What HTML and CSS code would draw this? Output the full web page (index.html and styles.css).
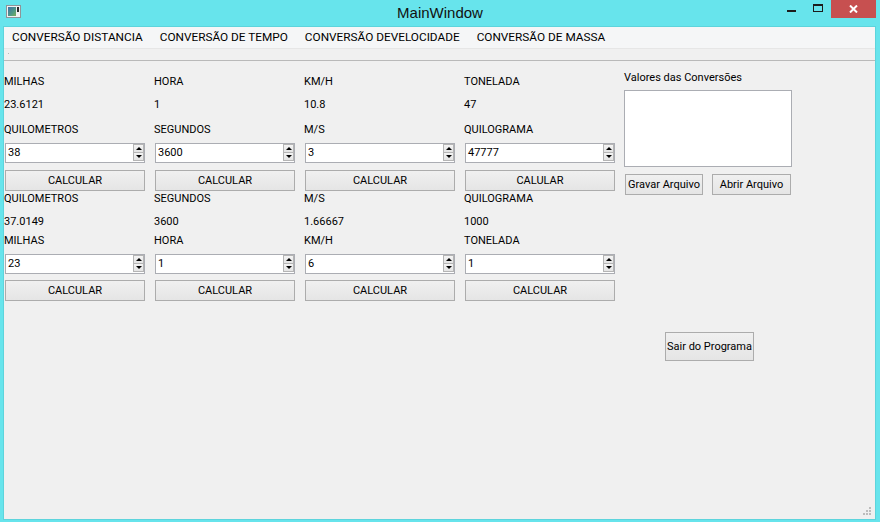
FILE: index.html
```html
<!DOCTYPE html>
<html>
<head>
<meta charset="utf-8">
<link rel="stylesheet" href="styles.css">
</head>
<body>
<div class="window">
  <div class="titlebar">
    <div class="tb-left">
      <svg class="app-icon" width="15" height="13" viewBox="0 0 15 13">
        <defs>
          <linearGradient id="pic" x1="0" y1="0" x2="1" y2="1">
            <stop offset="0" stop-color="#3f6fa8"/>
            <stop offset="0.6" stop-color="#4f9a86"/>
            <stop offset="1" stop-color="#7cae5a"/>
          </linearGradient>
        </defs>
        <rect x="0.5" y="0.5" width="14" height="12" fill="#f2f2f2" stroke="#8f9498"/>
        <rect x="2" y="2" width="8" height="9" fill="url(#pic)"/>
        <rect x="11" y="2" width="2" height="5" fill="#2a2a2a"/>
      </svg>
    </div>
    <div class="title">MainWindow</div>
    <div class="controls">
      <div class="ctl ctl-min"><span></span></div>
      <div class="ctl ctl-max"><span></span></div>
      <div class="ctl ctl-close">
        <svg width="9" height="8" viewBox="0 0 9 8"><path d="M1 0.5 L8 7.5 M8 0.5 L1 7.5" stroke="#fff" stroke-width="2"/></svg>
      </div>
    </div>
  </div>

  <div class="client">
    <div class="menubar">
      <span class="menu-item">CONVERSÃO DISTANCIA</span>
      <span class="menu-item">CONVERSÃO DE TEMPO</span>
      <span class="menu-item">CONVERSÃO DEVELOCIDADE</span>
      <span class="menu-item">CONVERSÃO DE MASSA</span>
    </div>
    <div class="toolbar"><span class="grip"></span></div>

    <div class="central">
      <div class="cols">
        <div class="col">
          <div class="txt r1">MILHAS</div>
          <div class="txt r2">23.6121</div>
          <div class="txt r3">QUILOMETROS</div>
          <div class="spin s1"><span class="spin-val">38</span><span class="spin-btns"><span class="sb"><i class="up"></i></span><span class="sb"><i class="down"></i></span></span></div>
          <div class="qbtn b1">CALCULAR</div>
          <div class="txt r4">QUILOMETROS</div>
          <div class="txt r5">37.0149</div>
          <div class="txt r6">MILHAS</div>
          <div class="spin s2"><span class="spin-val">23</span><span class="spin-btns"><span class="sb"><i class="up"></i></span><span class="sb"><i class="down"></i></span></span></div>
          <div class="qbtn b2">CALCULAR</div>
        </div>
        <div class="col">
          <div class="txt r1">HORA</div>
          <div class="txt r2">1</div>
          <div class="txt r3">SEGUNDOS</div>
          <div class="spin s1"><span class="spin-val">3600</span><span class="spin-btns"><span class="sb"><i class="up"></i></span><span class="sb"><i class="down"></i></span></span></div>
          <div class="qbtn b1">CALCULAR</div>
          <div class="txt r4">SEGUNDOS</div>
          <div class="txt r5">3600</div>
          <div class="txt r6">HORA</div>
          <div class="spin s2"><span class="spin-val">1</span><span class="spin-btns"><span class="sb"><i class="up"></i></span><span class="sb"><i class="down"></i></span></span></div>
          <div class="qbtn b2">CALCULAR</div>
        </div>
        <div class="col wide">
          <div class="txt r1">KM/H</div>
          <div class="txt r2">10.8</div>
          <div class="txt r3">M/S</div>
          <div class="spin s1"><span class="spin-val">3</span><span class="spin-btns"><span class="sb"><i class="up"></i></span><span class="sb"><i class="down"></i></span></span></div>
          <div class="qbtn b1">CALCULAR</div>
          <div class="txt r4">M/S</div>
          <div class="txt r5">1.66667</div>
          <div class="txt r6">KM/H</div>
          <div class="spin s2"><span class="spin-val">6</span><span class="spin-btns"><span class="sb"><i class="up"></i></span><span class="sb"><i class="down"></i></span></span></div>
          <div class="qbtn b2">CALCULAR</div>
        </div>
        <div class="col wide">
          <div class="txt r1">TONELADA</div>
          <div class="txt r2">47</div>
          <div class="txt r3">QUILOGRAMA</div>
          <div class="spin s1"><span class="spin-val">47777</span><span class="spin-btns"><span class="sb"><i class="up"></i></span><span class="sb"><i class="down"></i></span></span></div>
          <div class="qbtn b1">CALULAR</div>
          <div class="txt r4">QUILOGRAMA</div>
          <div class="txt r5">1000</div>
          <div class="txt r6">TONELADA</div>
          <div class="spin s2"><span class="spin-val">1</span><span class="spin-btns"><span class="sb"><i class="up"></i></span><span class="sb"><i class="down"></i></span></span></div>
          <div class="qbtn b2">CALCULAR</div>
        </div>
      </div>

      <div class="panel">
        <div class="panel-label">Valores das Conversões</div>
        <div class="textedit"></div>
        <div class="panel-btns">
          <div class="qbtn pbtn-save">Gravar Arquivo</div>
          <div class="qbtn pbtn-open">Abrir Arquivo</div>
        </div>
        <div class="qbtn exit">Sair do Programa</div>
      </div>
    </div>

    <svg class="sizegrip" width="10" height="10" viewBox="0 0 10 10">
      <rect x="7" y="0" width="2" height="2" fill="#bcbcbc"/>
      <rect x="4" y="3" width="2" height="2" fill="#bcbcbc"/>
      <rect x="7" y="3" width="2" height="2" fill="#bcbcbc"/>
      <rect x="1" y="6" width="2" height="2" fill="#bcbcbc"/>
      <rect x="4" y="6" width="2" height="2" fill="#bcbcbc"/>
      <rect x="7" y="6" width="2" height="2" fill="#bcbcbc"/>
    </svg>
  </div>
</div>
</body>
</html>
```

FILE: styles.css
```css
html, body {
  margin: 0;
  padding: 0;
}
body {
  width: 880px;
  height: 522px;
  overflow: hidden;
  background: #67e4ec;
  font-family: Roboto, "Liberation Sans", sans-serif;
  color: #000;
}
.window {
  display: flex;
  flex-direction: column;
  height: 522px;
}

/* title bar */
.titlebar {
  height: 27px;
  display: grid;
  grid-template-columns: 1fr auto 1fr;
  align-items: start;
}
.tb-left {
  display: flex;
}
.app-icon {
  margin: 5px 0 0 6px;
}
.title {
  font-family: "Liberation Sans", sans-serif;
  font-size: 15px;
  line-height: 26px;
  color: #111;
}
.controls {
  justify-self: end;
  display: flex;
  margin-right: 4px;
}
.ctl {
  width: 26px;
  height: 18px;
  display: flex;
  justify-content: center;
}
.ctl-min span {
  width: 9px;
  height: 2px;
  margin-top: 10px;
  background: #1c1c1c;
}
.ctl-max {
  width: 27px;
}
.ctl-max span {
  box-sizing: border-box;
  width: 10px;
  height: 8px;
  margin-top: 4px;
  border: 1px solid #1c1c1c;
  border-top-width: 2px;
}
.ctl-close {
  width: 45px;
  background: #c75050;
  align-items: center;
}

/* client */
.client {
  flex: 1;
  margin: 0 5px 3px 4px;
  background: #f0f0f0;
  position: relative;
  display: flex;
  flex-direction: column;
  box-shadow: 0 0 0 1px #5dd4dc;
}
.menubar {
  height: 21px;
  background: #f5f6f7;
  border-bottom: 1px solid #e6e6e6;
  display: flex;
  padding-left: 0;
}
.menu-item {
  padding: 0 8.5px;
  font-size: 11.8px;
  line-height: 21px;
  white-space: nowrap;
}
.menu-item:first-child {
  padding-left: 8px;
}
.toolbar {
  height: 11px;
  border-bottom: 1px solid #b9b9b9;
  display: flex;
}
.grip {
  width: 1px;
  height: 1px;
  margin: 4px 0 0 4px;
  background: #b8b8b8;
}

.central {
  display: flex;
  gap: 9px;
  padding-left: 1px;
}
.cols {
  display: flex;
  gap: 10px;
}
.col {
  width: 140px;
  display: flex;
  flex-direction: column;
}
.col.wide {
  width: 150px;
}

.txt {
  font-size: 11px;
  margin-left: -1px;
  white-space: nowrap;
}
.r1 { margin-top: 11px; height: 20px; line-height: 20px; }
.r2 { height: 26px; line-height: 26px; }
.r3 { height: 24px; line-height: 24px; }
.r4 { height: 16px; line-height: 16px; }
.r5 { margin-top: 5px; height: 20px; line-height: 20px; }
.r6 { height: 18px; line-height: 18px; }

.spin {
  box-sizing: border-box;
  height: 20px;
  display: flex;
  background: #fff;
  border: 1px solid #abadb3;
  font-size: 11px;
}
.s1 { margin-top: 1px; }
.s2 { margin-top: 4px; }
.spin-val {
  flex: 1;
  padding-left: 2px;
  line-height: 18px;
}
.spin-btns {
  width: 11px;
  margin: 0 0 1px 0;
  display: flex;
  flex-direction: column;
}
.sb {
  flex: 1;
  box-sizing: border-box;
  border: 1px solid #b5b5b5;
  background: linear-gradient(#f4f4f4, #e4e4e4);
  display: flex;
  align-items: center;
  justify-content: center;
}
.sb + .sb {
  border-top: none;
}
.up {
  width: 0;
  height: 0;
  border-left: 3px solid transparent;
  border-right: 3px solid transparent;
  border-bottom: 3px solid #000;
}
.down {
  width: 0;
  height: 0;
  border-left: 3px solid transparent;
  border-right: 3px solid transparent;
  border-top: 3px solid #000;
}

.qbtn {
  box-sizing: border-box;
  height: 21px;
  border: 1px solid #acacac;
  background: linear-gradient(#f0f0f0, #e5e5e5);
  font-size: 11px;
  display: flex;
  align-items: center;
  justify-content: center;
  white-space: nowrap;
}
.b1 { margin-top: 7px; }
.b2 { margin-top: 6px; }

.panel {
  width: 168px;
  display: flex;
  flex-direction: column;
}
.panel-label {
  margin-top: 9px;
  height: 16px;
  line-height: 16px;
  font-size: 11px;
  white-space: nowrap;
}
.textedit {
  margin-top: 4px;
  height: 77px;
  box-sizing: border-box;
  background: #fff;
  border: 1px solid #abadb3;
}
.panel-btns {
  display: flex;
  gap: 9px;
  margin-top: 7px;
  padding-left: 1px;
}
.pbtn-save { width: 78px; }
.pbtn-open { width: 79px; }
.exit {
  margin: 137px 0 0 41px;
  width: 89px;
  height: 29px;
  align-self: flex-start;
}

.sizegrip {
  position: absolute;
  right: 3px;
  bottom: 2px;
}
```
